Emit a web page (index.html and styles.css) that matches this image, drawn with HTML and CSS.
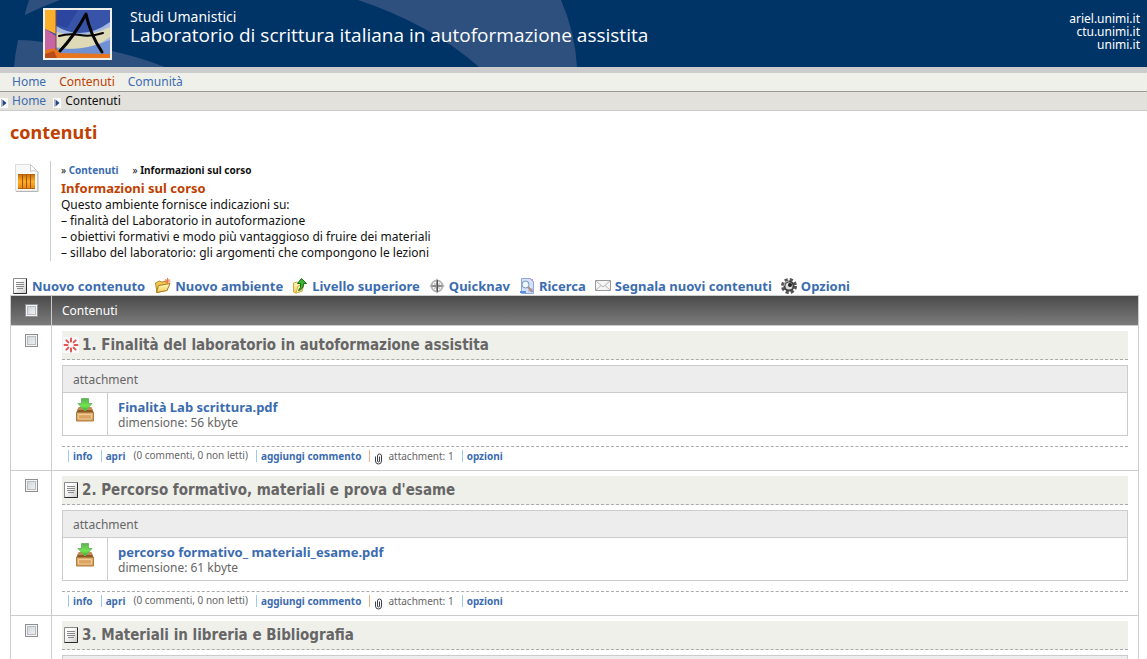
FILE: index.html
```html
<!DOCTYPE html>
<html lang="it">
<head>
<meta charset="utf-8">
<title>Laboratorio di scrittura italiana in autoformazione assistita</title>
<link rel="stylesheet" href="styles.css">
</head>
<body>
<svg class="defs" width="0" height="0" aria-hidden="true">
  <defs>
    <linearGradient id="paper" x1="0" y1="0" x2="1" y2="1"><stop offset=".3" stop-color="#fff"/><stop offset="1" stop-color="#c9c9c9"/></linearGradient>
    <linearGradient id="gold" x1="0" y1="0" x2="0" y2="1"><stop offset="0" stop-color="#fffbc0"/><stop offset="1" stop-color="#f0cc58"/></linearGradient>
    <linearGradient id="green" x1="0" y1="0" x2="0" y2="1"><stop offset="0" stop-color="#5fae55"/><stop offset=".6" stop-color="#6fe84c"/><stop offset="1" stop-color="#2fa51e"/></linearGradient>
    <linearGradient id="orange" x1="0" y1="0" x2="0" y2="1"><stop offset="0" stop-color="#c96a08"/><stop offset=".5" stop-color="#ffad2a"/><stop offset="1" stop-color="#e8860c"/></linearGradient>
    <linearGradient id="wood" x1="0" y1="0" x2="0" y2="1"><stop offset="0" stop-color="#e3b072"/><stop offset="1" stop-color="#d39a56"/></linearGradient>
    <symbol id="i-doc" viewBox="0 0 16 16">
      <path d="M1.500.5h13v15h-13z" fill="url(#paper)" stroke="#8a8a8a"/><path d="M14.500.5v15h-13" fill="none" stroke="#2a2a2a"/>
      <path d="M4 4.500h8M4 6.500h8M4 8.500h8M5 10.500h6" stroke="#8a8a8a"/>
    </symbol>
    <symbol id="i-box" viewBox="0 0 20 24">
      <path d="M4 9h12l3 6H1z" fill="#8d5a24"/><path d="M4 9h12l2 3H2z" fill="#c08a50"/>
      <path d="M1.500 14.500h17v8.500h-17z" fill="url(#wood)" stroke="#b07c42"/><path d="M3.500 16.500h13v4.500h-13z" fill="none" stroke="#f0cc96"/>
      <path d="M6.500.5h7v5h3.500L10 13 3 5.500h3.500z" fill="url(#green)" stroke="#6fb867"/>
    </symbol>
    <symbol id="i-clip" viewBox="0 0 9 12">
      <path d="M1.500 3.500v4.500a3 3 0 0 0 6 0V3a2 2 0 0 0-4 0v5a1 1 0 0 0 2 0V3.500" fill="none" stroke="#3a3f4a"/>
    </symbol>
    <symbol id="i-tri" viewBox="0 0 8 10"><path d="M0 0h8v10H0z" fill="#fff"/><path d="M2.500 1.500L6.500 5l-4 3.500z" fill="#1d4488"/><path d="M1.500 1v8" stroke="#bbb"/></symbol>
  </defs>
</svg>

<header class="banner">
  <svg class="banner-art" width="600" height="67" viewBox="0 0 600 67" aria-hidden="true">
    <g fill="#2d507f">
      <path d="M29 0Q26 8 25 15Q43 6 60 0z"/>
      <path d="M18 40Q15 54 14 67H165Q139 57 112 51V42H43Q30 40 18 40z"/>
      <path d="M358 0Q430 24 479 67H577Q575 32 561 0z"/>
    </g>
  </svg>
  <a class="logo" href="#" aria-label="Ariel">
    <svg width="65" height="48" viewBox="0 0 65 48">
      <path d="M0 0h65v48H0z" fill="#3854a8"/>
      <path d="M0 0h11v24L0 19z" fill="#fbb02c"/><path d="M0 19l11 7v13L0 41z" fill="#c764a2"/>
      <path d="M11 0h22L22 18 11 15z" fill="#2c469f"/>
      <path d="M11 16Q38 32 65 12V35Q40 48 11 40z" fill="#a3b9e2"/>
      <path d="M11 22Q38 30 65 17V27Q44 44 11 37z" fill="#ded9b7"/>
      <path d="M11 38Q36 42 65 30V44H11z" fill="#6f91d4"/>
      <path d="M0 40l11-2 4 5 50 1v4H0z" fill="#e8741d"/><path d="M0 44l9-3 3 7H0z" fill="#b94d19"/>
      <path d="M11 0v40" stroke="#7a4650"/>
      <path d="M15 41Q30 25 41 4Q45 24 57 42" fill="none" stroke="#050505" stroke-width="3" stroke-linecap="round" stroke-linejoin="round"/>
      <path d="M14 26Q24 23 35 25T58 23" fill="none" stroke="#050505" stroke-width="2" stroke-linecap="round"/>
    </svg>
  </a>
  <div class="names">
    <div class="area">Studi Umanistici</div>
    <div class="course">Laboratorio di scrittura italiana in autoformazione assistita</div>
  </div>
  <nav class="sites" aria-label="Siti">
    <a href="#">ariel.unimi.it</a><a href="#">ctu.unimi.it</a><a href="#">unimi.it</a>
  </nav>
</header>

<nav class="menu" aria-label="Menu">
  <a href="#">Home</a><a class="current" href="#">Contenuti</a><a href="#">Comunità</a>
</nav>
<nav class="crumbs" aria-label="Percorso">
  <svg width="8" height="10"><use href="#i-tri"/></svg><a href="#">Home</a>
  <svg class="next" width="8" height="10"><use href="#i-tri"/></svg><span>Contenuti</span>
</nav>

<main class="page">
  <h1>contenuti</h1>
  <section class="intro">
    <svg class="intro-icon" width="25" height="30" viewBox="0 0 25 30" aria-hidden="true">
      <path d="M1.500 1.500h15l7 7v19.500h-22z" fill="#f8f8f8" stroke="#ddd"/><path d="M2 28.500h22V9" fill="none" stroke="#b5b5b5"/>
      <path d="M16.500 1.500l7 7q-5-2-7 0z" fill="#fff" stroke="#c8c8c8"/>
      <path d="M4 11h17v15H4z" fill="url(#orange)"/><path d="M8.500 11v15M12.500 11v15M16.500 11v15" stroke="#9b560c"/><path d="M4 25.500h17M4 11.500h17" stroke="#b5620c"/>
    </svg>
    <div class="intro-body">
      <div class="trail"><span>» <a href="#">Contenuti</a></span><span>» <b>Informazioni sul corso</b></span></div>
      <h2>Informazioni sul corso</h2>
      <p>Questo ambiente fornisce indicazioni su:<br>– finalità del Laboratorio in autoformazione<br>– obiettivi formativi e modo più vantaggioso di fruire dei materiali<br>– sillabo del laboratorio: gli argomenti che compongono le lezioni</p>
    </div>
  </section>

  <nav class="tools" aria-label="Strumenti">
    <a href="#"><svg width="16" height="16"><use href="#i-doc"/></svg>Nuovo contenuto</a>
    <a href="#"><svg width="17" height="16" viewBox="0 0 17 16"><path d="M1.500 5l4-2 2 1 6-1v9L3 14.500z" fill="#f0c85a" stroke="#b98a20"/><path d="M2.500 14.500l2-7 11.500-2-3 7z" fill="url(#gold)" stroke="#a87a18"/><path d="M13.500 0v6M10.500 3h6M11.500 1l4 4M15.500 1l-4 4" stroke="#f0794a"/></svg>Nuovo ambiente</a>
    <a href="#"><svg width="16" height="16" viewBox="0 0 16 16"><path d="M1.500 5l4-1 1 1 4-1v9l-7 2-2-1z" fill="url(#gold)" stroke="#d0a73a"/><path d="M4 15l2-7 6-1-2 6z" fill="#fff5b0" stroke="#d6b04a"/><path d="M9.500.5l5 5h-3q0 6-5 7 3-3 2-7h-3z" fill="#3db52f" stroke="#126d13"/></svg>Livello superiore</a>
    <a href="#"><svg width="16" height="16" viewBox="0 0 16 16"><circle cx="8" cy="8" r="5.500" fill="none" stroke="#b5b5b5" stroke-width="2"/><path d="M8 0l1.500 6.500L16 8 9.500 9.500 8 16 6.500 9.500 0 8l6.500-1.500z" fill="#8a8a8a"/><path d="M8.500 2v12" stroke="#555"/><path d="M4 4l3 3M12 4L9 7M4 12l3-3M12 12L9 9" stroke="#c5c5c5"/></svg>Quicknav</a>
    <a href="#"><svg width="16" height="16" viewBox="0 0 16 16"><path d="M2.500.5h9l3 3v12h-12z" fill="#d4e3fb" stroke="#8aa8de"/><path d="M11 1h3v3z" fill="#c48be8"/><path d="M9 13h5M10 11h4" stroke="#8aa8de"/><circle cx="6.500" cy="6.500" r="3.500" fill="#eefaff" stroke="#7894b8"/><path d="M9 9l4.500 5" stroke="#b38b80" stroke-width="2"/><path d="M1 14h6" stroke="#5a90dc" stroke-width="2"/></svg>Ricerca</a>
    <a href="#"><svg width="16" height="16" viewBox="0 0 16 16"><path d="M.5 2.500h15v10H.5z" fill="#f5f5f5" stroke="#999"/><path d="M1 3l7 6 7-6M1 12l5-4.500M15 12l-5-4.500" fill="none" stroke="#b5b5b5"/></svg>Segnala nuovi contenuti</a>
    <a href="#"><svg width="16" height="16" viewBox="0 0 16 16"><circle cx="8" cy="8" r="6.500" fill="none" stroke="#555" stroke-width="3" stroke-dasharray="3.100 2"/><circle cx="8" cy="8" r="4.500" fill="#ddd" stroke="#444" stroke-width="2"/><circle cx="9" cy="7" r="2" fill="#222"/><path d="M3 8a5 5 0 0 1 5-5" fill="none" stroke="#bbb"/></svg>Opzioni</a>
  </nav>

  <table class="list">
    <thead>
      <tr><th class="pick"><input type="checkbox" aria-label="Seleziona tutti"></th><th class="label">Contenuti</th></tr>
    </thead>
    <tbody>
      <tr>
        <td class="pick"><input type="checkbox" aria-label="Seleziona contenuto 1"></td>
        <td class="item">
          <h3><svg width="16" height="16" viewBox="0 0 16 16" aria-hidden="true"><path d="M0 0h16v16H0z" fill="#fafafa"/><g stroke="#e25553" stroke-width="2" stroke-linecap="round"><path d="M8 1.500v3M8 11.500v3M1.500 8h3M11.500 8h3"/><path d="M3.400 3.400l2 2M10.600 10.600l2 2M12.600 3.400l-2 2M5.400 10.600l-2 2"/></g></svg>1. Finalità del laboratorio in autoformazione assistita</h3>
          <div class="files">
            <div class="files-head">attachment</div>
            <div class="file">
              <div class="file-icon"><svg width="20" height="24"><use href="#i-box"/></svg></div>
              <div class="file-info"><a href="#">Finalità Lab scrittura.pdf</a><span>dimensione: 56 kbyte</span></div>
            </div>
          </div>
          <div class="actions">
            <a class="bar" href="#">info</a><a class="bar" href="#">apri</a><span class="count">(0 commenti, 0 non letti)</span><a class="bar" href="#">aggiungi commento</a><span class="bar warm"><svg width="9" height="12"><use href="#i-clip"/></svg>attachment: 1</span><a class="bar" href="#">opzioni</a>
          </div>
        </td>
      </tr>
      <tr>
        <td class="pick"><input type="checkbox" aria-label="Seleziona contenuto 2"></td>
        <td class="item">
          <h3><svg width="16" height="16" aria-hidden="true"><use href="#i-doc"/></svg>2. Percorso formativo, materiali e prova d'esame</h3>
          <div class="files">
            <div class="files-head">attachment</div>
            <div class="file">
              <div class="file-icon"><svg width="20" height="24"><use href="#i-box"/></svg></div>
              <div class="file-info"><a href="#">percorso formativo_ materiali_esame.pdf</a><span>dimensione: 61 kbyte</span></div>
            </div>
          </div>
          <div class="actions">
            <a class="bar" href="#">info</a><a class="bar" href="#">apri</a><span class="count">(0 commenti, 0 non letti)</span><a class="bar" href="#">aggiungi commento</a><span class="bar warm"><svg width="9" height="12"><use href="#i-clip"/></svg>attachment: 1</span><a class="bar" href="#">opzioni</a>
          </div>
        </td>
      </tr>
      <tr>
        <td class="pick"><input type="checkbox" aria-label="Seleziona contenuto 3"></td>
        <td class="item">
          <h3><svg width="16" height="16" aria-hidden="true"><use href="#i-doc"/></svg>3. Materiali in libreria e Bibliografia</h3>
          <div class="files"><div class="files-head"></div></div>
        </td>
      </tr>
    </tbody>
  </table>
</main>
</body>
</html>
```
FILE: styles.css
```css
* { box-sizing: border-box; }
html { height: 100%; overflow: hidden; }
body {
  margin: 0;
  background: #fff;
  color: #111;
  font: 12px/16px "Noto Sans", "Open Sans", sans-serif;
}
a { color: #3b6cb0; text-decoration: none; }
svg { display: block; flex: none; }
.defs { position: absolute; }
h1, h2, h3, p { margin: 0; }

.banner {
  position: relative;
  display: flex;
  align-items: flex-start;
  padding: 8px 7px 7px 43px;
  background: #003366;
  color: #fff;
}
.banner-art { position: absolute; left: 0; top: 0; }
.logo {
  position: relative;
  border: 2px solid #f0f0eb;
}
.names { position: relative; margin-left: 18px; }
.area { font-size: 14px; line-height: 18px; }
.course { font-family: "Open Sans", "Noto Sans", sans-serif; font-size: 19px; line-height: 18px; }
.sites {
  display: flex;
  flex-direction: column;
  align-items: flex-end;
  margin-left: auto;
  padding-top: 4px;
  line-height: 13px;
}
.sites a { color: #fff; }

.menu {
  display: flex;
  gap: 13px;
  padding: 0 12px;
  border-top: 6px solid #ccc;
  border-bottom: 1px solid #999;
  background: #f0f0eb;
  line-height: 18px;
}
.menu .current { color: #c04000; }
.crumbs {
  display: flex;
  align-items: center;
  gap: 4px;
  height: 19px;
  border-bottom: 1px solid #ccc;
  background: #e3e1dc;
}
.crumbs svg { margin-top: 3px; }
.crumbs .next { margin-left: 3px; }

.page { padding: 10px 8px 0 10px; }
h1 { color: #c04000; font-size: 18px; line-height: 22px; }
.intro { display: flex; padding-top: 18px; }
.intro-icon { margin: 2px 11px 0 4px; }
.intro-body { padding-left: 10px; border-left: 1px solid #ccc; }
.trail { display: flex; gap: 14px; font-size: 10px; line-height: 18px; }
.trail a { font-weight: bold; }
h2 { color: #c04000; font-size: 13px; line-height: 18px; }

.tools {
  display: flex;
  gap: 9px;
  padding: 17px 0 1px 2px;
  font-size: 13px;
  font-weight: bold;
}
.tools a { display: flex; align-items: center; gap: 4px; }

.list { width: 100%; border-collapse: collapse; }
.list th, .list td { padding: 0; border: 1px solid #ccc; vertical-align: top; text-align: left; }
.list thead tr { background: linear-gradient(#4b4b4b, #7d7d7d); }
.list .label { height: 30px; padding-left: 10px; color: #fff; font-weight: normal; vertical-align: middle; }
.list .pick { width: 41px; padding-top: 8px; }
.pick input {
  display: block;
  appearance: none;
  width: 13px;
  height: 13px;
  margin: 0 auto;
  border: 1px solid #8e8f8f;
  background: linear-gradient(135deg, #cbcfd5, #f6f6f6);
  box-shadow: inset 0 0 0 1px #f4f4f4, inset 0 0 0 2px #b9bcc4;
}
.list .item { padding: 5px 10px 0; color: #666; }
h3 {
  display: flex;
  align-items: center;
  gap: 3px;
  padding: 4px 1px;
  border-bottom: 1px dashed #aaa;
  background: #f0f0eb;
  font: bold 15px/20px "DejaVu Sans Condensed", "Noto Sans", sans-serif;
}
.files { margin-top: 5px; border: 1px solid #ccc; }
.files-head { min-height: 27px; padding: 6px 10px 4px; border-bottom: 1px solid #ccc; background: #ededed; }
.file { display: flex; }
.file-icon { width: 45px; padding: 5px 12px 0; border-right: 1px solid #ccc; }
.file-info { display: flex; flex-direction: column; padding: 6px 10px 4px; }
.file-info a { font-size: 13px; font-weight: bold; }
.actions {
  display: flex;
  align-items: center;
  gap: 8px;
  margin-top: 10px;
  padding: 2px 6px 8px;
  border-top: 1px dashed #aaa;
  font-size: 10px;
  line-height: 13px;
}
.actions a { font-weight: bold; }
.bar { display: flex; gap: 5px; padding-left: 4px; border-left: 1px solid #9ccbf0; line-height: 12px; }
.bar svg { margin-top: 3px; margin-bottom: -3px; }
.bar.warm { border-color: #f0b080; }
```
